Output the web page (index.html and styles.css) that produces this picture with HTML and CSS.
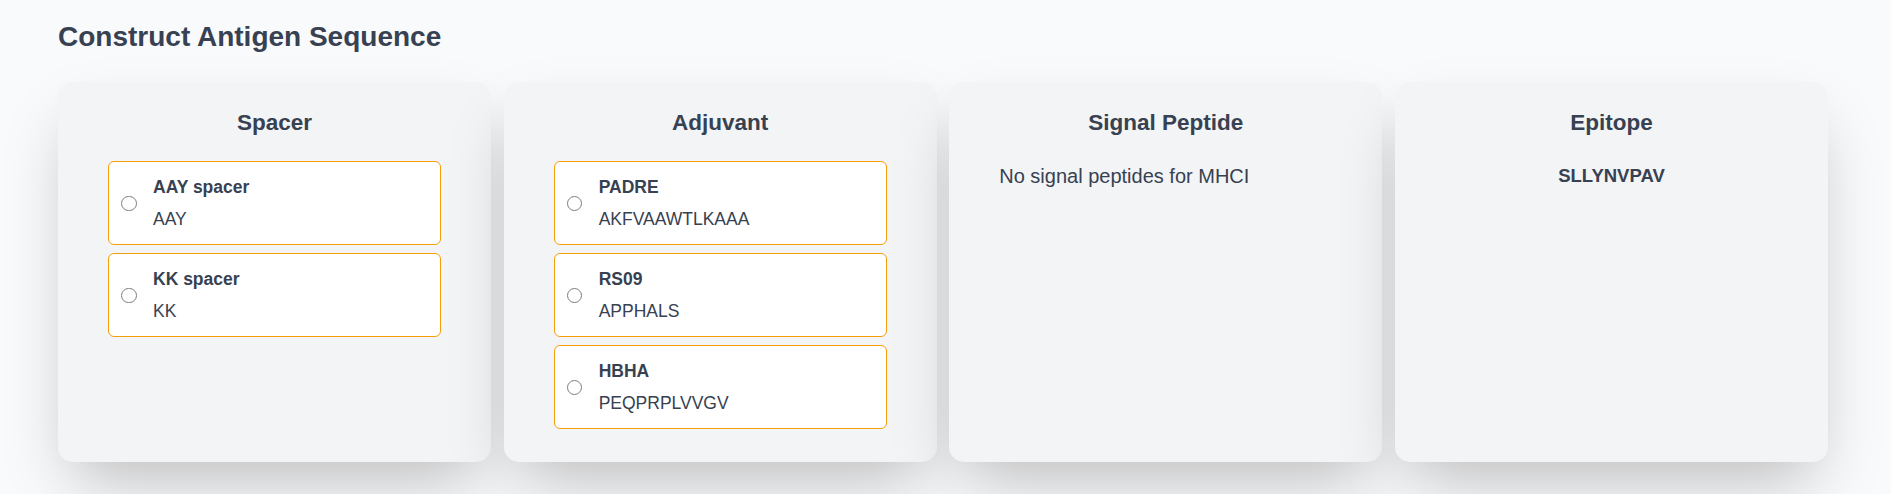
FILE: index.html
```html
<!DOCTYPE html>
<html lang="en">
<head>
<meta charset="utf-8">
<title>Construct Antigen Sequence</title>
<link rel="stylesheet" href="styles.css">
</head>
<body>
<main class="page">
  <h1 class="page-title">Construct Antigen Sequence</h1>
  <div class="columns">
    <section class="card">
      <h2 class="card-title">Spacer</h2>
      <div class="options">
        <label class="option">
          <input type="radio" name="spacer" class="radio">
          <span class="option-text">
            <span class="option-name">AAY spacer</span>
            <span class="option-seq">AAY</span>
          </span>
        </label>
        <label class="option">
          <input type="radio" name="spacer" class="radio">
          <span class="option-text">
            <span class="option-name">KK spacer</span>
            <span class="option-seq">KK</span>
          </span>
        </label>
      </div>
    </section>
    <section class="card">
      <h2 class="card-title">Adjuvant</h2>
      <div class="options">
        <label class="option">
          <input type="radio" name="adjuvant" class="radio">
          <span class="option-text">
            <span class="option-name">PADRE</span>
            <span class="option-seq">AKFVAAWTLKAAA</span>
          </span>
        </label>
        <label class="option">
          <input type="radio" name="adjuvant" class="radio">
          <span class="option-text">
            <span class="option-name">RS09</span>
            <span class="option-seq">APPHALS</span>
          </span>
        </label>
        <label class="option">
          <input type="radio" name="adjuvant" class="radio">
          <span class="option-text">
            <span class="option-name">HBHA</span>
            <span class="option-seq">PEQPRPLVVGV</span>
          </span>
        </label>
      </div>
    </section>
    <section class="card">
      <h2 class="card-title">Signal Peptide</h2>
      <p class="note">No signal peptides for MHCI</p>
    </section>
    <section class="card">
      <h2 class="card-title">Epitope</h2>
      <p class="epitope">SLLYNVPAV</p>
    </section>
  </div>
</main>
</body>
</html>
```
FILE: styles.css
```css
* {
  box-sizing: border-box;
}

html, body {
  margin: 0;
  background: #f9fafb;
}

body {
  font-family: "Liberation Sans", Arial, sans-serif;
  color: #374151;
}

.page {
  min-height: 494px;
  padding: 17px 63px 0 58px;
}

.page-title {
  margin: 0 0 25px;
  font-size: 28px;
  line-height: 40px;
  font-weight: 700;
  color: #374151;
}

.columns {
  display: grid;
  grid-template-columns: repeat(4, 1fr);
  gap: 12.5px;
  align-items: stretch;
}

.card {
  background: #f3f4f6;
  border-radius: 15px;
  padding: 22.7px 50px 32.7px;
  box-shadow: 0 31px 62px -15px rgba(0, 0, 0, 0.25);
}

.card-title {
  margin: 0 0 21.6px;
  font-size: 22.5px;
  line-height: 35px;
  font-weight: 700;
  text-align: center;
  color: #374151;
}

.options {
  display: flex;
  flex-direction: column;
  gap: 8px;
}

.option {
  display: flex;
  align-items: center;
  background: #ffffff;
  border: 1px solid #f59e0b;
  border-radius: 6px;
  padding: 12.25px 12.25px;
  cursor: pointer;
}

.radio {
  appearance: none;
  -webkit-appearance: none;
  flex: none;
  width: 15.5px;
  height: 15.5px;
  margin: 0 16.25px 0 0;
  border: 1.3px solid #7d7d7d;
  border-radius: 50%;
  background: #ffffff;
}

.option-text {
  display: flex;
  flex-direction: column;
  font-size: 17.5px;
  line-height: 25px;
}

.option-name {
  font-weight: 700;
}

.option-seq {
  margin-top: 7.5px;
}

.note {
  margin: 0;
  font-size: 20px;
  line-height: 30px;
}

.epitope {
  margin: 0;
  font-size: 18.5px;
  line-height: 30px;
  font-weight: 700;
  text-align: center;
}
```
